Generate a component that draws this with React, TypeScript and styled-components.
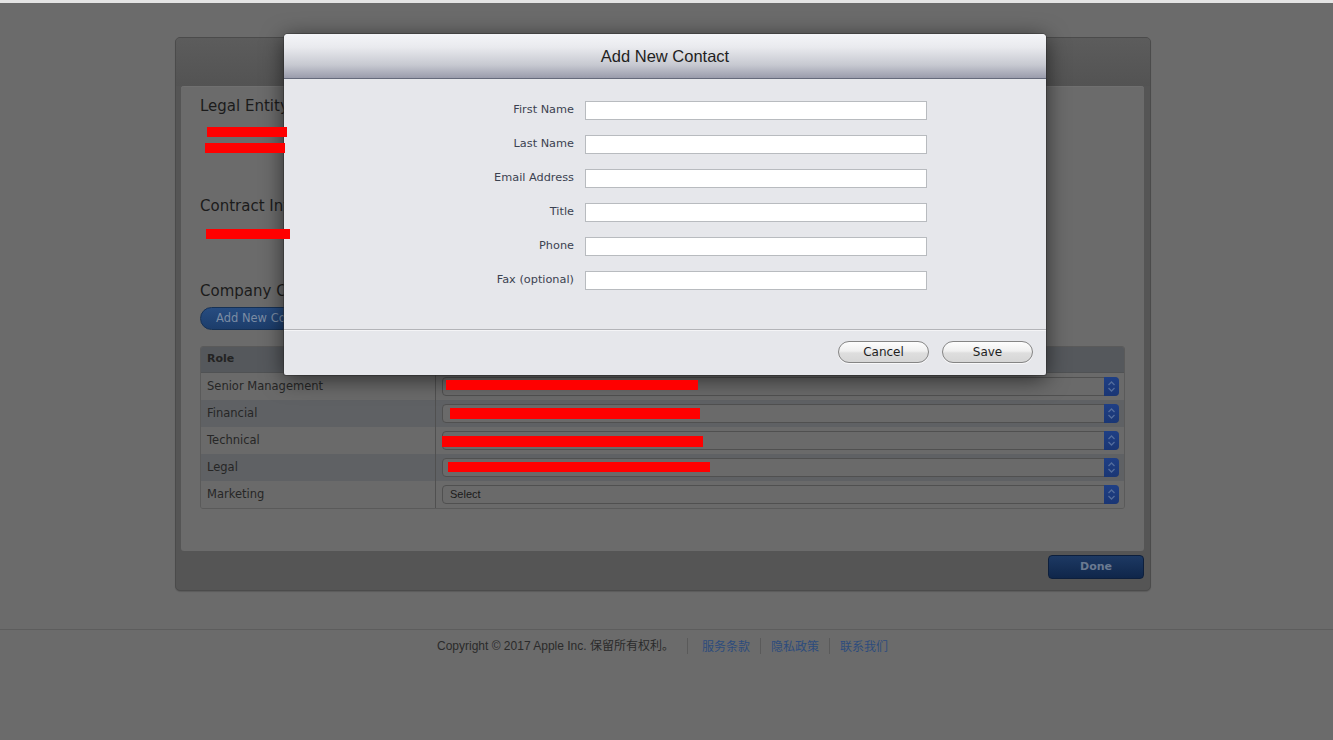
import React from "react";
import styled, { createGlobalStyle } from "styled-components";

const GlobalStyle = createGlobalStyle`
  html, body { margin: 0; padding: 0; background: #6b6b6b; }
  body { font-family: "Liberation Sans", Arial, sans-serif; }
  * { box-sizing: border-box; }
`;

const Page = styled.div`
  position: relative;
  min-height: 740px;
  background: #6b6b6b;
`;

const TopStrip = styled.div`
  height: 3px;
  background: #e4e4e4;
`;

const Main = styled.div`
  padding: 34px 0 0 175px;
`;

const Panel = styled.div`
  width: 976px;
  height: 554px;
  border: 1px solid #4b4b4b;
  border-radius: 5px;
  background: #555555;
  display: flex;
  flex-direction: column;
  box-shadow: 0 1px 1px rgba(0, 0, 0, 0.15);
`;

const PanelHead = styled.div`
  height: 48px;
  flex: none;
  border-radius: 4px 4px 0 0;
  background: linear-gradient(#5c5c5c, #535353);
`;

const Card = styled.div`
  height: 465px;
  margin: 0 6px 0 5px;
  padding: 10px 19px 0 19px;
  background: #6b6b6b;
  border-radius: 3px;
  box-shadow: inset 0 1px 0 #707070;
  display: flex;
  flex-direction: column;
`;

const SectionTitle = styled.div<{ $mt?: number }>`
  margin-top: ${(p) => p.$mt ?? 0}px;
  height: 20px;
  line-height: 20px;
  color: #1b1b1b;
  font-family: "DejaVu Sans", sans-serif;
  font-size: 15px;
  white-space: nowrap;
`;

const RedactLine = styled.div<{ $mt?: number; $indent: number }>`
  margin-top: ${(p) => p.$mt ?? 0}px;
  height: 16px;
  display: flex;
  align-items: center;
  padding-left: ${(p) => p.$indent}px;
`;

const RedBar = styled.span<{ $w: number }>`
  position: relative;
  z-index: 2;
  display: inline-block;
  width: ${(p) => p.$w}px;
  height: 10px;
  background: #ff0000;
`;

const AddButton = styled.div`
  margin-top: 6px;
  width: 130px;
  height: 23px;
  border-radius: 12px;
  border: 1px solid #163155;
  background: linear-gradient(#274c80, #1c3d6b);
  color: #7b8ca4;
  font-family: "DejaVu Sans", sans-serif;
  font-size: 11.5px;
  line-height: 21px;
  padding-left: 15px;
  white-space: nowrap;
`;

const Table = styled.div`
  margin-top: 16px;
  border: 1px solid #5a5a5a;
  border-radius: 3px;
  overflow: hidden;
`;

const Row = styled.div<{ $variant: "head" | "odd" | "even" }>`
  display: grid;
  grid-template-columns: 235px 1fr;
  height: ${(p) => (p.$variant === "head" ? 26 : 27)}px;
  background: ${(p) =>
    p.$variant === "head" ? "#55585c" : p.$variant === "even" ? "#5f6164" : "#6a6a6a"};
  border-bottom: ${(p) => (p.$variant === "head" ? "1px solid #505254" : "none")};
`;

const RoleCell = styled.div<{ $head?: boolean }>`
  display: flex;
  align-items: center;
  padding: 0 0 2px 6px;
  font-family: "DejaVu Sans", sans-serif;
  font-size: ${(p) => (p.$head ? 11 : 11.5)}px;
  font-weight: ${(p) => (p.$head ? 700 : 400)};
  color: ${(p) => (p.$head ? "#232323" : "#262626")};
  border-right: 1px solid #505050;
`;

const ContactCell = styled.div`
  display: flex;
  align-items: center;
  padding: 0 5px 1px 6px;
`;

const Select = styled.div`
  position: relative;
  flex: 1;
  height: 19px;
  display: flex;
  border: 1px solid #505050;
  border-radius: 4px;
  background: #6a6a6a;
`;

const SelectText = styled.div`
  flex: 1;
  padding-left: 7px;
  font-size: 11px;
  line-height: 17px;
  color: #1a1a1a;
`;

const Stepper = styled.div`
  width: 15px;
  margin: -1px -1px -1px 0;
  border-radius: 0 4px 4px 0;
  background: linear-gradient(#1f3f85, #1a3674);
  display: flex;
  align-items: center;
  justify-content: center;
`;

const SelectRedact = styled.span<{ $l: number; $t: number; $w: number; $h: number }>`
  position: absolute;
  z-index: 2;
  left: ${(p) => p.$l}px;
  top: ${(p) => p.$t}px;
  width: ${(p) => p.$w}px;
  height: ${(p) => p.$h}px;
  background: #ff0000;
`;

const PanelFoot = styled.div`
  display: flex;
  justify-content: flex-end;
  padding: 4px 6px 0 0;
`;

const DoneButton = styled.div`
  width: 96px;
  height: 24px;
  border-radius: 4px;
  border: 1px solid #0d1f3c;
  background: linear-gradient(#1d3963, #0f264a);
  color: #6a7a91;
  font-family: "DejaVu Sans", sans-serif;
  font-weight: 700;
  font-size: 11px;
  line-height: 22px;
  text-align: center;
`;

const Footer = styled.div`
  margin-top: 38px;
  border-top: 1px solid #5d5d5d;
  padding: 8px 8px 0 0;
  display: flex;
  justify-content: center;
  font-size: 12px;
  line-height: 16px;
  font-family: "Liberation Sans", "Noto Sans CJK SC", sans-serif;
`;

const Copyright = styled.span`
  color: #2a2a2a;
  padding-right: 13px;
`;

const FooterLink = styled.span<{ $first?: boolean }>`
  color: #2d4c7d;
  border-left: 1px solid #5a5a5a;
  padding: 0 10px 0 ${(p) => (p.$first ? 14 : 10)}px;
  font-family: "Noto Sans CJK SC", sans-serif;
  &:last-child { padding-right: 0; }
`;

/* ---------- modal ---------- */

const Modal = styled.div`
  position: absolute;
  z-index: 1;
  left: 284px;
  top: 34px;
  width: 762px;
  border-radius: 4px 4px 2px 2px;
  background: #e6e7eb;
  box-shadow: 0 4px 22px rgba(0, 0, 0, 0.6), 0 0 0 1px rgba(60, 60, 60, 0.5);
  overflow: hidden;
`;

const ModalHeader = styled.div`
  height: 45px;
  border-bottom: 1px solid #656a7b;
  background: linear-gradient(#f4f5f8 0%, #e9eaee 30%, #c7c9d1 70%, #9a9cac 100%);
  display: flex;
  align-items: center;
  justify-content: center;
`;

const ModalTitle = styled.div`
  font-family: "Liberation Sans", Arial, sans-serif;
  font-size: 16.5px;
  color: #1f1f22;
  padding-top: 1px;
`;

const ModalBody = styled.div`
  padding: 22px 0 39px 0;
  display: grid;
  grid-template-columns: 290px 342px;
  column-gap: 11px;
  row-gap: 15px;
  border-bottom: 1px solid #b3b4b8;
`;

const FieldLabel = styled.label`
  text-align: right;
  font-family: "DejaVu Sans", sans-serif;
  font-size: 11.3px;
  color: #3b4250;
  line-height: 17px;
`;

const FieldInput = styled.input`
  height: 19px;
  margin: 0;
  border: 1px solid #b8bbbf;
  background: #ffffff;
  padding: 0 4px;
  font-size: 12px;
  outline: none;
`;

const ModalFooter = styled.div`
  height: 45px;
  padding: 11px 13px 0 0;
  display: flex;
  justify-content: flex-end;
  gap: 13px;
  box-shadow: inset 0 1px 0 #f4f4f6;
`;

const PillButton = styled.button`
  width: 91px;
  height: 22px;
  margin: 0;
  border-radius: 11px;
  border: 1px solid #858585;
  background: linear-gradient(#fdfdfd 0%, #f0f0f0 45%, #dedede 55%, #d6d6d6 100%);
  font-family: "DejaVu Sans", sans-serif;
  font-size: 12px;
  color: #1f1f1f;
  padding: 0;
  box-shadow: 0 1px 0 rgba(255, 255, 255, 0.7);
`;

const Chevrons = () => (
  <svg width="9" height="13" viewBox="0 0 9 13">
    <path d="M1.5 5 L4.5 2 L7.5 5" fill="none" stroke="#536c9c" strokeWidth="1.3" />
    <path d="M1.5 8 L4.5 11 L7.5 8" fill="none" stroke="#536c9c" strokeWidth="1.3" />
  </svg>
);

type Role = {
  name: string;
  redact?: { l: number; t: number; w: number; h: number };
};

const roles: Role[] = [
  { name: "Senior Management", redact: { l: 3, t: 2, w: 252, h: 10 } },
  { name: "Financial", redact: { l: 7, t: 3, w: 250, h: 11 } },
  { name: "Technical", redact: { l: -1, t: 4, w: 261, h: 11 } },
  { name: "Legal", redact: { l: 5, t: 3, w: 262, h: 10 } },
  { name: "Marketing" },
];

const fields = ["First Name", "Last Name", "Email Address", "Title", "Phone", "Fax (optional)"];

export default function App() {
  return (
    <>
      <GlobalStyle />
      <Page>
        <TopStrip />
        <Main>
          <Panel>
            <PanelHead />
            <Card>
              <SectionTitle>Legal Entity Information</SectionTitle>
              <RedactLine $mt={8} $indent={7}>
                <RedBar $w={80} />
              </RedactLine>
              <RedactLine $indent={5}>
                <RedBar $w={80} />
              </RedactLine>
              <SectionTitle $mt={40}>Contract Information</SectionTitle>
              <RedactLine $mt={10} $indent={6}>
                <RedBar $w={84} />
              </RedactLine>
              <SectionTitle $mt={39}>Company Contacts</SectionTitle>
              <AddButton>Add New Contact</AddButton>
              <Table>
                <Row $variant="head">
                  <RoleCell $head>Role</RoleCell>
                  <ContactCell />
                </Row>
                {roles.map((r, i) => (
                  <Row key={r.name} $variant={i % 2 === 0 ? "odd" : "even"}>
                    <RoleCell>{r.name}</RoleCell>
                    <ContactCell>
                      <Select>
                        <SelectText>{r.redact ? "" : "Select"}</SelectText>
                        <Stepper>
                          <Chevrons />
                        </Stepper>
                        {r.redact && (
                          <SelectRedact
                            $l={r.redact.l}
                            $t={r.redact.t}
                            $w={r.redact.w}
                            $h={r.redact.h}
                          />
                        )}
                      </Select>
                    </ContactCell>
                  </Row>
                ))}
              </Table>
            </Card>
            <PanelFoot>
              <DoneButton>Done</DoneButton>
            </PanelFoot>
          </Panel>
        </Main>
        <Footer>
          <Copyright>Copyright © 2017 Apple Inc. 保留所有权利。</Copyright>
          <FooterLink $first>服务条款</FooterLink>
          <FooterLink>隐私政策</FooterLink>
          <FooterLink>联系我们</FooterLink>
        </Footer>

        <Modal>
          <ModalHeader>
            <ModalTitle>Add New Contact</ModalTitle>
          </ModalHeader>
          <ModalBody>
            {fields.map((f) => (
              <React.Fragment key={f}>
                <FieldLabel>{f}</FieldLabel>
                <FieldInput type="text" />
              </React.Fragment>
            ))}
          </ModalBody>
          <ModalFooter>
            <PillButton>Cancel</PillButton>
            <PillButton>Save</PillButton>
          </ModalFooter>
        </Modal>
      </Page>
    </>
  );
}
